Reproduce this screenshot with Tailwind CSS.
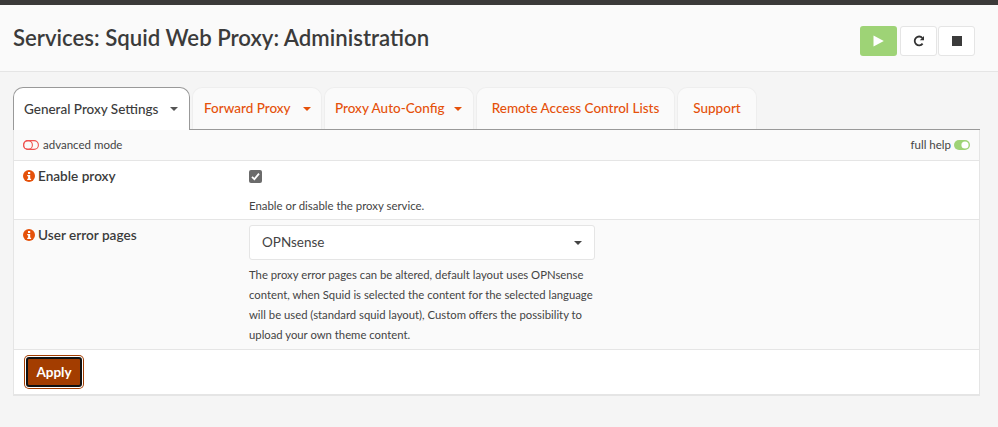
<!DOCTYPE html>
<html lang="en">
<head>
<meta charset="utf-8">
<title>Services: Squid Web Proxy: Administration</title>
<script src="https://cdn.jsdelivr.net/npm/@tailwindcss/browser@4"></script>
</head>
<body class="m-0 h-[427px] w-[998px] overflow-hidden bg-[#f5f5f5] font-['Lato','Noto_Sans',sans-serif] text-[#333]">
<div class="h-[5px] bg-[#3b3a39]"></div>
<header class="flex h-[67px] items-start justify-between border-b border-[#e5e5e5] bg-[#fafafa] pl-[13px] pr-[23px]">
  <h1 class="mt-[20px] text-[22.2px] leading-[26px] font-semibold text-[#3b3b3b]">Services: Squid Web Proxy: Administration</h1>
  <div class="mt-[21px] flex">
    <button class="flex h-[30px] w-[37px] items-center justify-center rounded-[3px] bg-[#9ed376]">
      <svg width="11" height="12" viewBox="0 0 11 12"><path d="M0.5 0.5 L10.8 6 L0.5 11.5Z" fill="#fff"/></svg>
    </button>
    <button class="ml-[3px] flex h-[30px] w-[37px] items-center justify-center rounded-[3px] border border-[#e5e5e5] bg-white">
      <svg width="12" height="12" viewBox="0 0 12 12" fill="none"><path d="M9.6 8.6A4.4 4.4 0 1 1 9.4 3" stroke="#333" stroke-width="1.8"/><path d="M11 1v4.2H6.8z" fill="#333"/></svg>
    </button>
    <button class="ml-[1px] flex h-[30px] w-[37px] items-center justify-center rounded-[3px] border border-[#e5e5e5] bg-white">
      <span class="block size-[10px] bg-[#3b3b3b]"></span>
    </button>
  </div>
</header>
<main class="pt-[15px] pl-[13px] pr-[18px]">
  <nav class="flex h-[43px] gap-[2px] border-b border-[#999] text-[13.5px] font-medium text-[#e5510a]">
    <div class="flex h-[43px] w-[177px] items-center justify-between rounded-t-[10px] border border-b-0 border-[#999] bg-white pr-[11px] pl-[10px] text-[#3b3b3b]">
      <span>General Proxy Settings</span><span class="size-0 border-x-4 border-t-4 border-x-transparent border-t-[#555]"></span>
    </div>
    <div class="flex h-[42px] w-[130px] items-center justify-between rounded-t-[10px] border border-b-0 border-[#eee] bg-[#fafafa] pr-[10px] pl-[11px]">
      <span>Forward Proxy</span><span class="size-0 border-x-4 border-t-4 border-x-transparent border-t-[#e5510a]"></span>
    </div>
    <div class="flex h-[42px] w-[150px] items-center justify-between rounded-t-[10px] border border-b-0 border-[#eee] bg-[#fafafa] pr-[11px] pl-[10px]">
      <span>Proxy Auto-Config</span><span class="size-0 border-x-4 border-t-4 border-x-transparent border-t-[#e5510a]"></span>
    </div>
    <div class="flex h-[42px] w-[199px] items-center justify-center rounded-t-[10px] border border-b-0 border-[#eee] bg-[#fafafa]">Remote Access Control Lists</div>
    <div class="flex h-[42px] w-[80px] items-center justify-center rounded-t-[10px] border border-b-0 border-[#eee] bg-[#fafafa]">Support</div>
  </nav>
  <section class="w-[967px] border-x border-b-2 border-[#e5e5e5] bg-white">
    <div class="flex h-[31px] items-center justify-between border-b border-[#e5e5e5] bg-[#fafafa] pr-[9px] pl-[9px] text-[11.5px] text-[#444]">
      <span class="flex items-center gap-[4px]">
        <svg width="16" height="10" viewBox="0 0 16 10" fill="none"><rect x=".6" y=".6" width="14.8" height="8.8" rx="4.4" stroke="#ef5350" stroke-width="1.1"/><circle cx="5" cy="5" r="4.4" stroke="#ef5350" stroke-width="1.1"/></svg>
        advanced mode
      </span>
      <span class="flex items-center gap-[3px]">
        full help
        <svg width="16" height="10" viewBox="0 0 16 10"><rect width="16" height="10" rx="5" fill="#9ed376"/><circle cx="11" cy="5" r="3.6" fill="#fff"/></svg>
      </span>
    </div>
    <div class="flex h-[59px] border-b border-[#e5e5e5] bg-white">
      <div class="flex h-[30px] w-[235px] items-center gap-[3px] pl-[9px] text-[13.6px] font-semibold text-[#3b3b3b]">
        <svg width="12" height="12" viewBox="0 0 12 12"><circle cx="6" cy="6" r="6" fill="#e5510a"/><rect x="5" y="2" width="2.2" height="2" fill="#fff"/><path d="M4.2 5h3v3.8h.9V10H4.2V8.8h.9V6.2h-.9z" fill="#fff"/></svg>
        Enable proxy
      </div>
      <div class="pt-[9px]">
        <span class="flex size-[13px] items-center justify-center rounded-[2px] bg-[#6b6b6b]">
          <svg width="9" height="9" viewBox="0 0 9 9" fill="none"><path d="M1 4.8 3.4 7.2 8 1.6" stroke="#fff" stroke-width="1.8"/></svg>
        </span>
        <p class="mt-[13px] text-[11.4px] leading-[20px] text-[#444]">Enable or disable the proxy service.</p>
      </div>
    </div>
    <div class="flex h-[130px] border-b border-[#e5e5e5] bg-[#fafafa]">
      <div class="flex h-[30px] w-[235px] items-center gap-[3px] pl-[9px] text-[13.6px] font-semibold text-[#3b3b3b]">
        <svg width="12" height="12" viewBox="0 0 12 12"><circle cx="6" cy="6" r="6" fill="#e5510a"/><rect x="5" y="2" width="2.2" height="2" fill="#fff"/><path d="M4.2 5h3v3.8h.9V10H4.2V8.8h.9V6.2h-.9z" fill="#fff"/></svg>
        User error pages
      </div>
      <div class="w-[346px] pt-[5px]">
        <div class="flex h-[35px] items-center justify-between rounded-[3px] border border-[#e5e5e5] bg-white pr-[12px] pl-[12px] text-[13.5px] text-[#444]">
          <span>OPNsense</span><span class="size-0 border-x-4 border-t-4 border-x-transparent border-t-[#444]"></span>
        </div>
        <p class="mt-[5px] text-[11.3px] leading-[20px] whitespace-nowrap text-[#444]">The proxy error pages can be altered, default layout uses OPNsense<br>content, when Squid is selected the content for the selected language<br>will be used (standard squid layout), Custom offers the possibility to<br>upload your own theme content.</p>
      </div>
    </div>
    <div class="flex h-[44px] items-center pl-[12px]">
      <button class="flex h-[30px] w-[56px] items-center justify-center rounded-[3px] border-2 border-[#111] bg-[#a33d00] text-[13.5px] font-bold text-white shadow-[0_0_0_1px_#fff,0_0_0_2px_#a33d00]">Apply</button>
    </div>
  </section>
</main>
</body>
</html>
